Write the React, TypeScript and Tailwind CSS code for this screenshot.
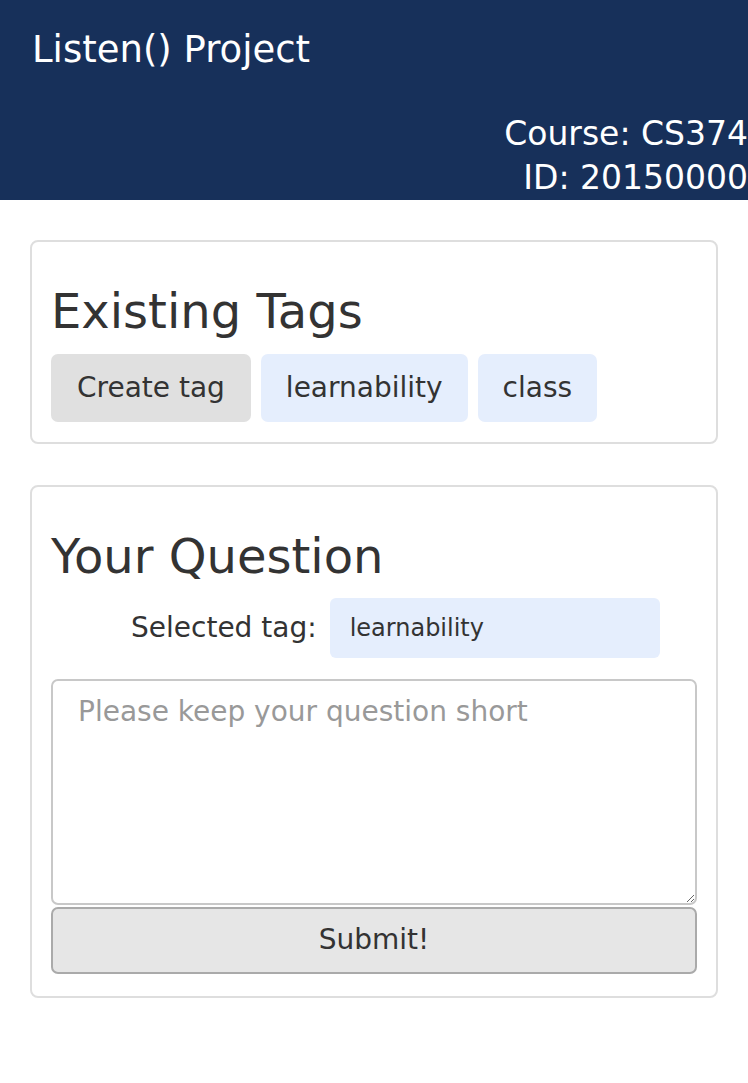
import { useState } from "react";

const tags = ["learnability", "class"];

const App = () => {
  const [selected, setSelected] = useState("learnability");
  const [question, setQuestion] = useState("");

  return (
    <div className="min-h-[1083px] bg-white text-[#333] font-['DejaVu_Sans',Verdana,sans-serif]">
      <header className="h-[200px] bg-[#17305a] text-white flex flex-col justify-between">
        <h1 className="pt-[30px] pl-[32px] text-[37px] leading-[1.1]">Listen() Project</h1>
        <div className="text-right text-[33px] leading-[44px] whitespace-nowrap">
          <div>Course: CS374</div>
          <div>ID: 20150000</div>
        </div>
      </header>

      <div className="mx-[30px] mt-[40px] border-2 border-[#dedede] rounded-[8px] px-[19px] pt-[43px] pb-[20px]">
        <h2 className="text-[48px] leading-[1.1]">Existing Tags</h2>
        <div className="mt-[16px] flex gap-[10px] text-[28px]">
          <button className="h-[68px] px-[26px] rounded-[7px] bg-[#e0e0e0]">Create tag</button>
          {tags.map((tag) => (
            <button
              key={tag}
              onClick={() => setSelected(tag)}
              className="h-[68px] px-[25px] rounded-[7px] bg-[#e5eefd]"
            >
              {tag}
            </button>
          ))}
        </div>
      </div>

      <div className="mx-[30px] mt-[41px] border-2 border-[#dedede] rounded-[8px] px-[19px] pt-[43px] pb-[22px]">
        <h2 className="text-[48px] leading-[1.1]">Your Question</h2>
        <div className="mt-[15px] ml-[80px] flex items-center gap-[13px]">
          <span className="text-[28px]">Selected tag:</span>
          <div className="w-[330px] h-[60px] rounded-[6px] bg-[#e5eefd] pl-[20px] flex items-center text-[24px]">
            {selected}
          </div>
        </div>
        <textarea
          value={question}
          onChange={(e) => setQuestion(e.target.value)}
          placeholder="Please keep your question short"
          className="mt-[21px] block w-full h-[226px] border-2 border-[#c8c8c8] rounded-[7px] pt-[11px] px-[25px] text-[28px] leading-[40px] placeholder:text-[#999] outline-none"
        />
        <button className="mt-[2px] block w-full h-[67px] border-2 border-[#aaa] rounded-[7px] bg-[#e6e6e6] text-[28px]">
          Submit!
        </button>
      </div>
    </div>
  );
};

export default App;
